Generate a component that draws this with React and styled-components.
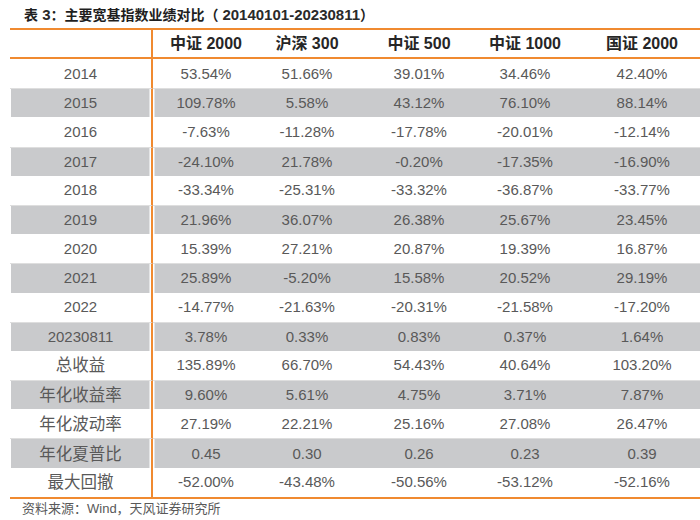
import React from 'react';
import styled, { createGlobalStyle } from 'styled-components';

const GlobalStyle = createGlobalStyle`
  body {
    margin: 0;
    background: #ffffff;
    overflow: hidden;
  }
`;

const ORANGE = '#F08A30';
const GREY = '#C9CACC';
const FONT = `"Liberation Sans", Arial, "Noto Sans CJK SC", sans-serif`;

const Page = styled.div`
  width: 700px;
  height: 520px;
  overflow: hidden;
  font-family: ${FONT};
`;

const Title = styled.div`
  height: 28px;
  padding-left: 24px;
  display: flex;
  align-items: center;
  font-size: 14px;
  font-weight: bold;
  color: #1f1f1f;
  white-space: nowrap;
`;

const TitleNum = styled.span`
  font-size: 15px;
  color: #2a2a2a;
`;

const Table = styled.table`
  margin-left: 10px;
  width: 707px;
  table-layout: fixed;
  border-collapse: separate;
  border-spacing: 0;
  border-top: 2px solid ${ORANGE};
  border-bottom: 2px solid ${ORANGE};
`;

const HeadRow = styled.tr`
  height: 29px;
`;

const HeadCell = styled.th`
  padding: 0;
  font-size: 16px;
  line-height: 20px;
  font-weight: bold;
  color: #262626;
  text-align: center;
  border-bottom: 2px solid ${ORANGE};
  border-right: ${p => (p.$first ? `2px solid ${ORANGE}` : 'none')};
  white-space: nowrap;
`;

const Row = styled.tr`
  height: 29.2px;
  background: ${p => (p.$shaded ? GREY : 'transparent')};
`;

const Cell = styled.td`
  padding: 0;
  text-align: center;
  line-height: 20px;
  font-size: ${p => (p.$label && p.$cjk ? '16.5px' : '15px')};
  color: #595959;
  white-space: nowrap;
  border-top: ${p => (p.$shaded ? '1px solid #dedede' : 'none')};
  border-right: ${p => (p.$first ? `2px solid ${ORANGE}` : 'none')};
  box-shadow: ${p =>
    p.$first ? 'inset -1.5px 0 0 #fff, inset 1px 0 0 #fff' : p.$second ? 'inset 1.5px 0 0 #fff' : 'none'};
`;

const Footer = styled.div`
  padding: 2px 0 0 22px;
  font-size: 13px;
  line-height: 16px;
  color: #595959;
  white-space: nowrap;
`;

const columns = ['中证 2000', '沪深 300', '中证 500', '中证 1000', '国证 2000'];
const widths = [143, 106, 96, 128, 84, 150];

const rows = [
  ['2014', '53.54%', '51.66%', '39.01%', '34.46%', '42.40%'],
  ['2015', '109.78%', '5.58%', '43.12%', '76.10%', '88.14%'],
  ['2016', '-7.63%', '-11.28%', '-17.78%', '-20.01%', '-12.14%'],
  ['2017', '-24.10%', '21.78%', '-0.20%', '-17.35%', '-16.90%'],
  ['2018', '-33.34%', '-25.31%', '-33.32%', '-36.87%', '-33.77%'],
  ['2019', '21.96%', '36.07%', '26.38%', '25.67%', '23.45%'],
  ['2020', '15.39%', '27.21%', '20.87%', '19.39%', '16.87%'],
  ['2021', '25.89%', '-5.20%', '15.58%', '20.52%', '29.19%'],
  ['2022', '-14.77%', '-21.63%', '-20.31%', '-21.58%', '-17.20%'],
  ['20230811', '3.78%', '0.33%', '0.83%', '0.37%', '1.64%'],
  ['总收益', '135.89%', '66.70%', '54.43%', '40.64%', '103.20%'],
  ['年化收益率', '9.60%', '5.61%', '4.75%', '3.71%', '7.87%'],
  ['年化波动率', '27.19%', '22.21%', '25.16%', '27.08%', '26.47%'],
  ['年化夏普比', '0.45', '0.30', '0.26', '0.23', '0.39'],
  ['最大回撤', '-52.00%', '-43.48%', '-50.56%', '-53.12%', '-52.16%'],
];

export default function App() {
  return (
    <Page>
      <GlobalStyle />
      <Title>
        表<TitleNum>&nbsp;3</TitleNum>：主要宽基指数业绩对比（&nbsp;<TitleNum>20140101-20230811</TitleNum>）
      </Title>
      <Table>
        <colgroup>
          {widths.map((w, i) => (
            <col key={i} style={{ width: w }} />
          ))}
        </colgroup>
        <thead>
          <HeadRow>
            <HeadCell $first />
            {columns.map(c => (
              <HeadCell key={c}>{c}</HeadCell>
            ))}
          </HeadRow>
        </thead>
        <tbody>
          {rows.map((r, i) => {
            const shaded = i % 2 === 1;
            const cjk = /[^\d]/.test(r[0]);
            return (
              <Row key={r[0]} $shaded={shaded}>
                {r.map((v, j) => (
                  <Cell
                    key={j}
                    $shaded={shaded}
                    $first={j === 0}
                    $second={j === 1}
                    $label={j === 0}
                    $cjk={cjk}
                  >
                    {v}
                  </Cell>
                ))}
              </Row>
            );
          })}
        </tbody>
      </Table>
      <Footer>资料来源：Wind，天风证券研究所</Footer>
    </Page>
  );
}
